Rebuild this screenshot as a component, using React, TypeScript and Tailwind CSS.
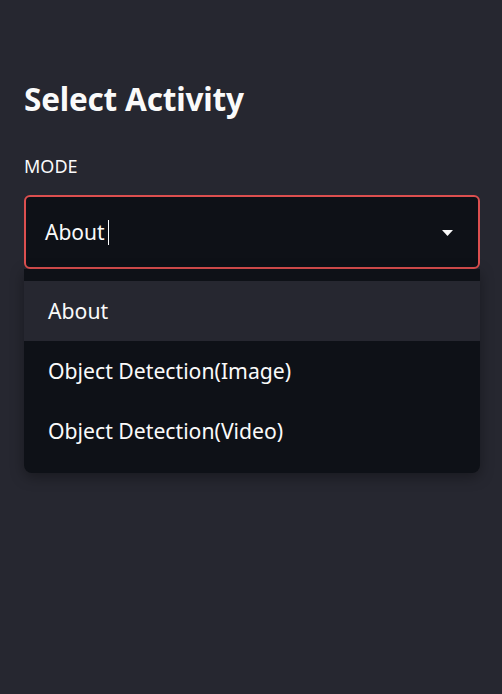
import { useState } from "react";

const options = ["About", "Object Detection(Image)", "Object Detection(Video)"];

export default function App() {
  const [active] = useState(0);

  return (
    <div
      className="w-[502px] h-[694px] bg-[#262730] text-[#fafafa] pl-6 pr-[22px] pt-[76px]"
      style={{ fontFamily: '"Noto Sans", "Open Sans", sans-serif' }}
    >
      <h2 className="text-[31.5px] font-bold leading-[46px] tracking-[-0.2px]">Select Activity</h2>

      <p className="mt-[31px] text-[18px] leading-[26px]">MODE</p>

      <div className="mt-[16px] h-[74px] rounded-[6px] border-2 border-[#dc4f4f] bg-[#0e1117] flex items-center pl-[19px] pr-[25px]">
        <span className="text-[21px] leading-none">About</span>
        <span className="ml-[3px] w-px h-[25px] bg-white" />
        <svg className="ml-auto mt-[2px]" width="11" height="6" viewBox="0 0 11 6">
          <path d="M0 0h11L5.5 6z" fill="#fafafa" />
        </svg>
      </div>

      <div className="rounded-b-[8px] bg-[#0e1117] py-[12px] shadow-[0_4px_14px_rgba(0,0,0,0.35)]">
        {options.map((o, i) => (
          <div
            key={o}
            className={`h-[60px] flex items-center pl-6 text-[21.2px] ${i === active ? "bg-[#262730]" : ""}`}
          >
            {o}
          </div>
        ))}
      </div>
    </div>
  );
}
